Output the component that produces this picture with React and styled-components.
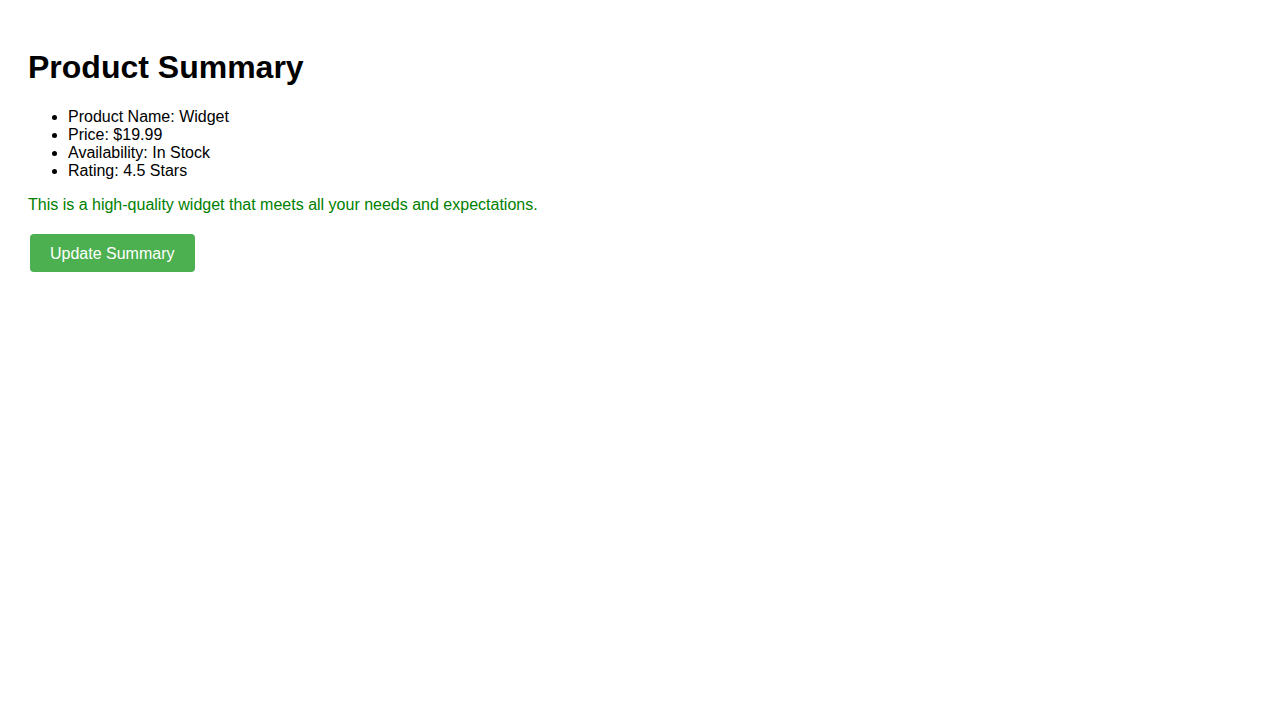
import React, { useState } from 'react'
import styled, { createGlobalStyle } from 'styled-components'

const GlobalStyle = createGlobalStyle`
  body {
    margin: 8px;
    background: #fff;
    font-family: 'Liberation Sans', Arial, sans-serif;
  }
`;

const Container = styled.div`
  padding: 20px;
`;

const Title = styled.h1`
  font-size: 32px;
  margin: 21px 0 22px;
  color: #000;
`;

const List = styled.ul`
  margin: 16px 0;
  padding-left: 40px;
  font-size: 16px;
  line-height: 18px;
`;

const Description = styled.p`
  color: green;
  font-size: 16px;
  line-height: 18px;
  margin: 16px 0 20px;
`;

const Button = styled.button`
  display: block;
  margin-left: 2px;
  padding: 11px 20px 9px;
  font-family: 'Liberation Sans', Arial, sans-serif;
  font-size: 16px;
  line-height: 18px;
  color: #fff;
  background: #4caf50;
  border: none;
  border-radius: 4px;
  cursor: pointer;
`;

const App = () => {
  const [product] = useState({
    name: 'Widget',
    price: '$19.99',
    availability: 'In Stock',
    rating: '4.5 Stars',
  });

  return (
    <Container>
      <GlobalStyle />
      <Title>Product Summary</Title>
      <List>
        <li>Product Name: {product.name}</li>
        <li>Price: {product.price}</li>
        <li>Availability: {product.availability}</li>
        <li>Rating: {product.rating}</li>
      </List>
      <Description>This is a high-quality widget that meets all your needs and expectations.</Description>
      <Button>Update Summary</Button>
    </Container>
  )
}

export default App
